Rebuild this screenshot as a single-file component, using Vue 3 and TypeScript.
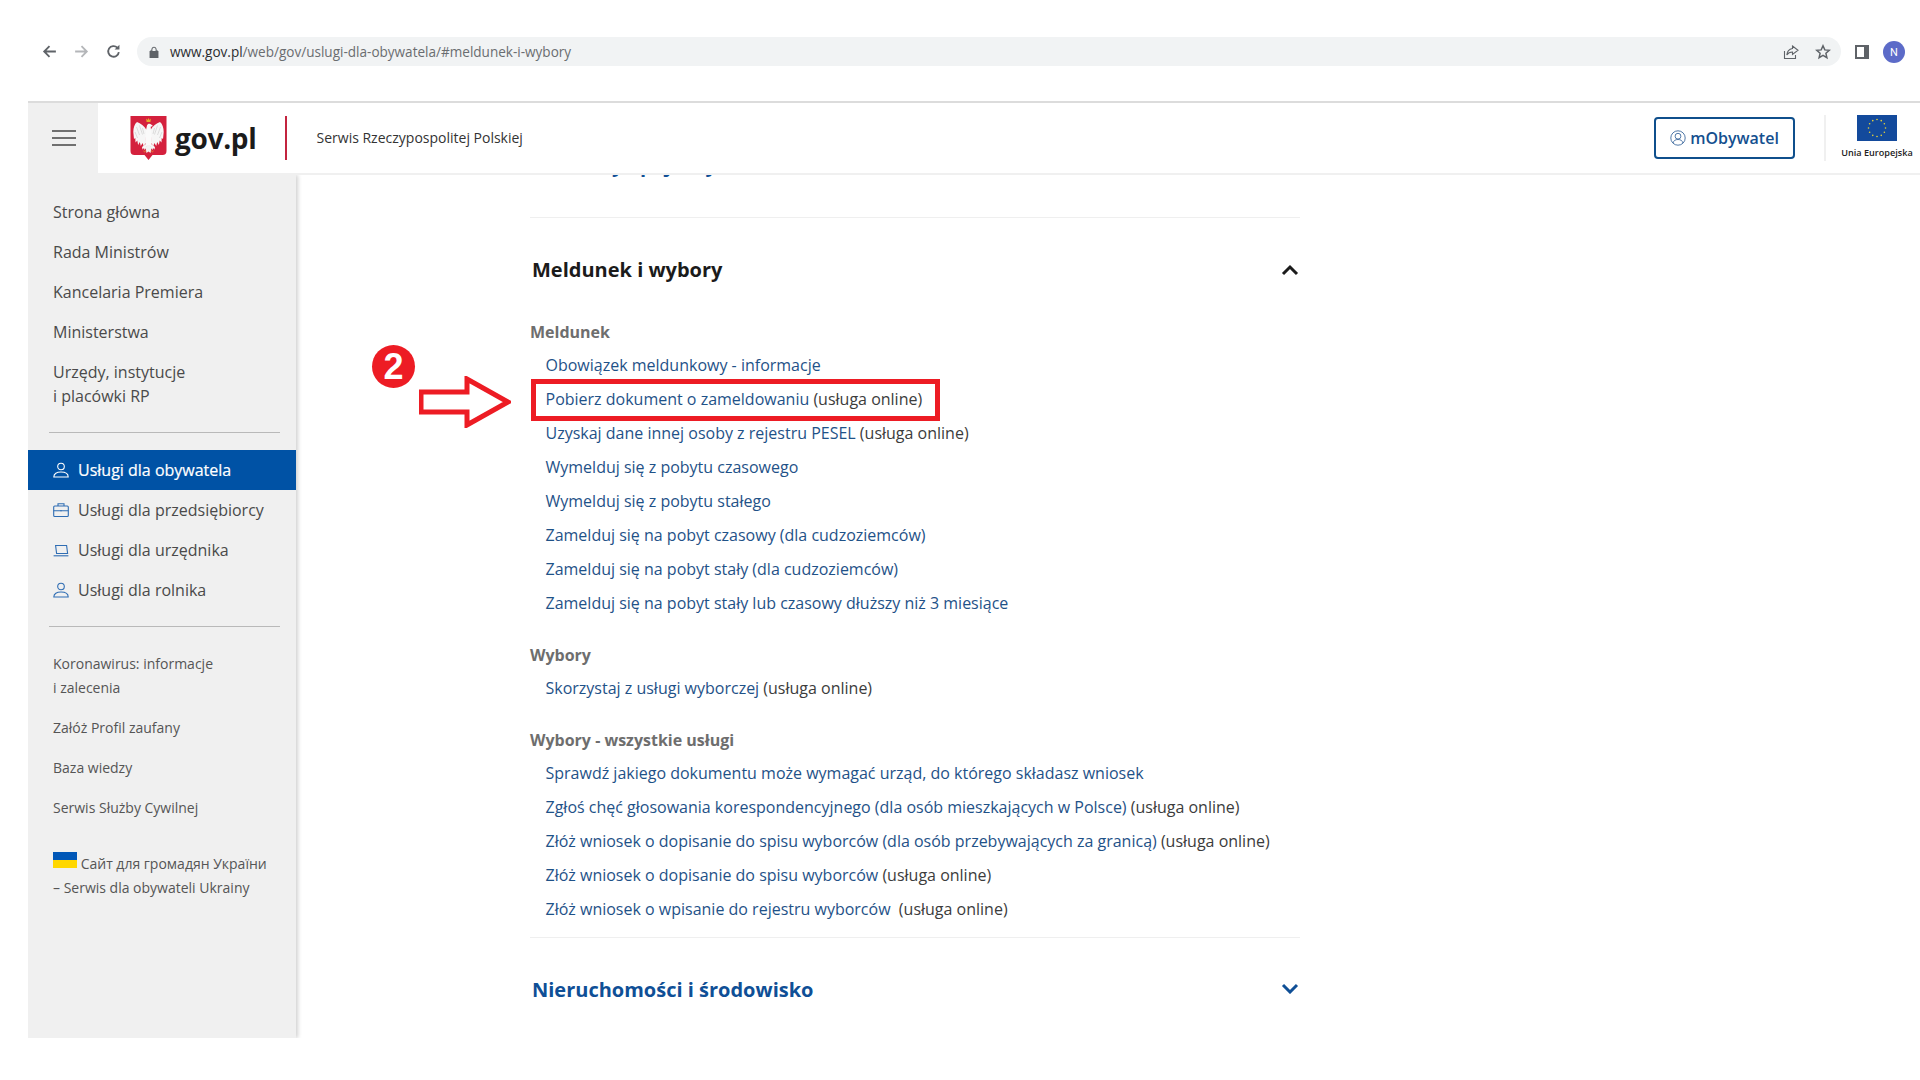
<script setup lang="ts">
interface Row { text: string; online?: string }
interface Group { title: string; rows: Row[] }

const topNav: string[][] = [
  ['Strona główna'],
  ['Rada Ministrów'],
  ['Kancelaria Premiera'],
  ['Ministerstwa'],
  ['Urzędy, instytucje', 'i placówki RP'],
]
const services = [
  { label: 'Usługi dla obywatela', icon: 'person', active: true },
  { label: 'Usługi dla przedsiębiorcy', icon: 'case', active: false },
  { label: 'Usługi dla urzędnika', icon: 'laptop', active: false },
  { label: 'Usługi dla rolnika', icon: 'person', active: false },
]
const extras: string[][] = [
  ['Koronawirus: informacje', 'i zalecenia'],
  ['Załóż Profil zaufany'],
  ['Baza wiedzy'],
  ['Serwis Służby Cywilnej'],
]
const groups: Group[] = [
  {
    title: 'Meldunek',
    rows: [
      { text: 'Obowiązek meldunkowy - informacje' },
      { text: 'Pobierz dokument o zameldowaniu', online: ' (usługa online)' },
      { text: 'Uzyskaj dane innej osoby z rejestru PESEL', online: ' (usługa online)' },
      { text: 'Wymelduj się z pobytu czasowego' },
      { text: 'Wymelduj się z pobytu stałego' },
      { text: 'Zamelduj się na pobyt czasowy (dla cudzoziemców)' },
      { text: 'Zamelduj się na pobyt stały (dla cudzoziemców)' },
      { text: 'Zamelduj się na pobyt stały lub czasowy dłuższy niż 3 miesiące' },
    ],
  },
  {
    title: 'Wybory',
    rows: [{ text: 'Skorzystaj z usługi wyborczej', online: ' (usługa online)' }],
  },
  {
    title: 'Wybory - wszystkie usługi',
    rows: [
      { text: 'Sprawdź jakiego dokumentu może wymagać urząd, do którego składasz wniosek' },
      { text: 'Zgłoś chęć głosowania korespondencyjnego (dla osób mieszkających w Polsce)', online: ' (usługa online)' },
      { text: 'Złóż wniosek o dopisanie do spisu wyborców (dla osób przebywających za granicą)', online: ' (usługa online)' },
      { text: 'Złóż wniosek o dopisanie do spisu wyborców', online: ' (usługa online)' },
      { text: 'Złóż wniosek o wpisanie do rejestru wyborców', online: '  (usługa online)' },
    ],
  },
]
const stars = Array.from({ length: 12 }, (_, i) => ({
  x: 20 + 8.5 * Math.sin((i * Math.PI) / 6),
  y: 13 - 8.5 * Math.cos((i * Math.PI) / 6),
}))
const sides = ['', 'matrix(-1 0 0 1 36 0)']
</script>

<template>
  <div class="page">
    <div class="toolbar">
      <svg class="nav-ico" viewBox="0 0 16 16"><path d="M14 8H3M8 3 3 8l5 5" fill="none" stroke="#5f6368" stroke-width="1.7" /></svg>
      <svg class="nav-ico" viewBox="0 0 16 16"><path d="M2 8h11M8 3l5 5-5 5" fill="none" stroke="#b4b6b9" stroke-width="1.7" /></svg>
      <svg class="nav-ico" viewBox="0 0 16 16"><path d="M13 8.5A5 5 0 1 1 11.6 4.4" fill="none" stroke="#5f6368" stroke-width="1.7" /><path d="M13.6 1.6v4.6H9z" fill="#5f6368" /></svg>
      <div class="omnibox">
        <svg class="lock" viewBox="0 0 10 12"><path d="M1 5h8v7H1zM2.8 5V3.4a2.2 2.2 0 0 1 4.4 0V5" fill="#5f6368" stroke="#5f6368" stroke-width=".9" /><path d="M3.4 5V3.4a1.6 1.6 0 0 1 3.2 0V5z" fill="#f1f3f4" /></svg>
        <span class="url"><b>www.gov.pl</b>/web/gov/uslugi-dla-obywatela/#meldunek-i-wybory</span>
        <svg class="omni-ico" viewBox="0 0 16 16"><path d="M1.5 7v7.5h11V11" fill="none" stroke="#5f6368" stroke-width="1.1" /><path d="M9.5 2 15 6.2 9.5 10.4V8C7 8 5 9 3.8 11c.3-3.6 2.5-6 5.7-6.500z" fill="none" stroke="#5f6368" stroke-width="1.1" /></svg>
        <svg class="omni-ico" viewBox="0 0 16 16"><path d="m8 1.8 1.8 4.100 4.500.4-3.400 3 1 4.400L8 11.400 4.100 13.700l1-4.400-3.400-3 4.500-.4z" fill="none" stroke="#5f6368" stroke-width="1.500" /></svg>
      </div>
      <div class="panel-ico"><span></span></div>
      <div class="avatar">N</div>
    </div>

    <div class="frame">
      <header class="site-header">
        <div class="burger"><i></i><i></i><i></i></div>
        <div class="brand">
          <svg class="crest" viewBox="0 0 36 44">
            <path d="M0 0h36v35q0 4-4 4H22l-4 5-4-5H4q-4 0-4-4z" fill="#d4213d" />
            <g v-for="t in sides" :key="t" :transform="t">
              <path d="M16 14C14 10 10 7.500 6.500 6 4 8 2.800 12 2.800 16l.7 7 1.300-1 .2 4.500 1.800-2 .8 4.500 1.700-3 1 4 1.800-3 1.200 3.500L15 27z" fill="#f6f6f6" />
              <path d="M6 11l3 8M4.500 16l2.500 6M9 9.500l3 9M12 12l1.500 6" stroke="#c9c9c9" stroke-width=".6" fill="none" />
              <path d="M16.500 27l-5 4 .5 2.500 1.500-1.500.5 2 2-2.500 1-3z" fill="#f6f6f6" />
              <path d="M13 35l1 .8 1-.8 1 .8" stroke="#e7a92c" stroke-width=".8" fill="none" />
            </g>
            <path d="M16.500 9.500c.5-2 3-2.500 4.200-1l1.800 1.500-2.300.7.300 3.300 1 13-3.500 4.500-3.500-4.500 1-13z" fill="#fafafa" />
            <path d="M15 31l3-2 3 2-1 6-2-1.500L16 37z" fill="#f2f2f2" />
            <path d="M15.600 2.500l1.400 1.400L18 2l1 1.900 1.400-1.400-.5 3.400h-3.800z" fill="#e7a92c" />
          </svg>
          <span class="logotype">gov.pl</span>
        </div>
        <div class="brand-rule"></div>
        <div class="service-name">Serwis Rzeczypospolitej Polskiej</div>
        <div class="header-right">
          <a class="mobywatel">
            <svg viewBox="0 0 16 16"><circle cx="8" cy="8" r="7.200" fill="none" stroke="#3d6a9e" stroke-width=".9" /><circle cx="8" cy="6.200" r="2.900" fill="none" stroke="#3d6a9e" stroke-width=".9" /><path d="M3 13c.6-2.400 2.500-3.500 5-3.500s4.400 1.100 5 3.500" fill="none" stroke="#3d6a9e" stroke-width=".9" /></svg>
            mObywatel
          </a>
          <div class="eu">
            <svg class="eu-flag" viewBox="0 0 40 26"><rect width="40" height="26" fill="#134a9c" /><circle v-for="(s, i) in stars" :key="i" :cx="s.x" :cy="s.y" r=".8" fill="#e6d23a" /></svg>
            <span>Unia Europejska</span>
          </div>
        </div>
      </header>

      <div class="content">
        <aside class="sidebar">
          <nav class="top-nav">
            <a v-for="item in topNav" :key="item[0]">
              <span v-for="line in item" :key="line">{{ line }}</span>
            </a>
          </nav>
          <div class="side-rule first"></div>
          <nav class="services">
            <a v-for="s in services" :key="s.label" :class="{ active: s.active }">
              <svg viewBox="0 0 16 16">
                <template v-if="s.icon === 'person'">
                  <circle cx="8" cy="4.500" r="3.300" />
                  <path d="M.8 15c0-3.500 3-5 7.200-5s7.200 1.500 7.200 5z" />
                </template>
                <template v-else-if="s.icon === 'case'">
                  <rect x=".7" y="4" width="14.600" height="10.500" rx="1" />
                  <path d="M5 4V1.800h6V4M.7 8.800h14.600M8 8v1.600" />
                </template>
                <template v-else>
                  <path d="M2.600 3.500h11l1 8h-11z" />
                  <path d="M.6 13.800h14.800" />
                </template>
              </svg>
              {{ s.label }}
            </a>
          </nav>
          <div class="side-rule second"></div>
          <nav class="extras">
            <a v-for="item in extras" :key="item[0]">
              <span v-for="line in item" :key="line">{{ line }}</span>
            </a>
            <a class="ua">
              <span><i class="ua-flag"></i> Сайт для громадян України</span>
              <span>– Serwis dla obywateli Ukrainy</span>
            </a>
          </nav>
        </aside>

        <main class="main">
          <h2 class="section-title clipped">Kierowcy i pojazdy</h2>
          <div class="rule top"></div>
          <div class="section-head">
            <h2 class="section-title">Meldunek i wybory</h2>
            <svg class="chev" viewBox="0 0 18 12"><path d="M2 10l7-7 7 7" fill="none" stroke="#1b1b1b" stroke-width="3" /></svg>
          </div>
          <section v-for="g in groups" :key="g.title" class="group">
            <h3>{{ g.title }}</h3>
            <ul>
              <li v-for="r in g.rows" :key="r.text"><a>{{ r.text }}</a>{{ r.online }}</li>
            </ul>
          </section>
          <div class="rule bottom"></div>
          <div class="section-head next">
            <h2 class="section-title blue">Nieruchomości i środowisko</h2>
            <svg class="chev up" viewBox="0 0 18 12"><path d="M2 3l7 7 7-7" fill="none" stroke="#0f4f96" stroke-width="3" /></svg>
          </div>
        </main>
      </div>
    </div>

    <div class="badge">2</div>
    <svg class="arrow" viewBox="0 0 92 52"><path d="M2 16h46V3l41 23-41 23V36H2z" fill="#fff" stroke="#ed1c24" stroke-width="5" /></svg>
    <div class="highlight"></div>
  </div>
</template>

<style>
html, body { margin: 0; background: #fff; }
</style>

<style scoped>
.page { position: relative; width: 1920px; height: 1080px; overflow: hidden; font-family: "Open Sans", "Noto Sans", sans-serif; background: #fff; color: #444; }

.toolbar { height: 101px; box-sizing: border-box; padding: 37px 15px 0 41px; display: flex; align-items: flex-start; }
.nav-ico { width: 17px; height: 17px; margin-right: 15px; margin-top: 6px; flex: none; }
.omnibox { width: 1704px; height: 29px; border-radius: 15px; background: #f1f3f4; display: flex; align-items: center; padding: 0 10px 0 12px; box-sizing: border-box; flex: none; }
.lock { width: 10px; height: 12px; flex: none; }
.url { margin-left: 11px; font-size: 13.550px; color: #6a6d70; flex: 1; }
.url b { font-weight: 400; color: #2b2d30; }
.omni-ico { width: 16px; height: 16px; margin-left: 16px; flex: none; }
.panel-ico { width: 10px; height: 10px; margin: 8px 0 0 14px; background: #fff; border: 2px solid #5f6368; position: relative; flex: none; }
.panel-ico span { position: absolute; right: 0; top: 0; bottom: 0; width: 3px; background: #5f6368; }
.avatar { width: 22px; height: 22px; border-radius: 50%; background: #5c6bc8; color: #fff; font: 400 11px "Roboto", sans-serif; display: flex; align-items: center; justify-content: center; margin: 4px 0 0 14px; flex: none; }

.frame { margin-left: 28px; border-top: 2px solid #dcdcdc; }
.site-header { position: relative; z-index: 2; height: 70px; background: #fff; border-bottom: 2px solid #f0f0f0; display: flex; align-items: center; }
.burger { width: 70px; height: 100%; background: #f0f0f0; padding-left: 2px; box-sizing: border-box; display: flex; flex-direction: column; gap: 5px; align-items: center; justify-content: center; flex: none; }
.burger i { display: block; width: 24px; height: 2px; background: #707070; }
.brand { display: flex; align-items: center; margin-left: 32px; }
.crest { width: 37px; height: 44px; }
.logotype { margin-left: 8px; font-weight: 700; font-size: 28px; line-height: 40px; color: #1b1b1b; letter-spacing: -.3px; }
.brand-rule { width: 2px; height: 44px; background: #c3243f; margin-left: 28px; }
.service-name { margin-left: 30px; margin-bottom: 1px; font-size: 14px; color: #333; }
.header-right { margin-left: auto; display: flex; align-items: center; height: 100%; }
.mobywatel { width: 141px; height: 42px; box-sizing: border-box; border: 2px solid #0f4f8c; border-radius: 4px; display: flex; align-items: center; justify-content: center; gap: 4px; color: #14508f; font-size: 16px; font-weight: 600; }
.mobywatel svg { width: 16px; height: 16px; }
.eu { margin-left: 29px; width: 96px; height: 46px; border-left: 2px solid #f0f0f0; display: flex; flex-direction: column; align-items: center; box-sizing: border-box; padding-left: 8px; }
.eu-flag { width: 40px; height: 26px; }
.eu span { margin-top: 5px; font-size: 9.100px; line-height: 14px; font-weight: 600; color: #222; white-space: nowrap; }

.content { display: flex; align-items: flex-start; }
.sidebar { width: 268px; height: 863px; flex: none; background: #f0f0f0; box-shadow: 2px 0 4px rgba(0,0,0,.18); clip-path: inset(0 -8px 0 0); color: #4a4a4a; position: relative; z-index: 1; }
.top-nav { padding: 25px 0 0 25px; display: flex; flex-direction: column; gap: 16px; font-size: 16px; line-height: 24px; }
.top-nav a, .extras a { display: flex; flex-direction: column; }
.side-rule { height: 1px; background: #b9b9b9; margin: 0 16px 0 21px; }
.side-rule.first { margin-top: 24px; }
.services { margin-top: 17px; display: flex; flex-direction: column; }
.services a { height: 40px; display: flex; align-items: center; padding-left: 25px; font-size: 16px; color: #4a4a4a; }
.services a.active { background: #0052a5; color: #fff; -webkit-text-stroke: .2px #fff; }
.services svg { width: 16px; height: 16px; margin-right: 9px; fill: none; stroke: #2f6db3; stroke-width: 1.100; }
.services a.active svg { stroke: #fff; }
.side-rule.second { margin-top: 16px; }
.extras { padding: 25px 0 0 25px; display: flex; flex-direction: column; gap: 16px; font-size: 14px; line-height: 24px; color: #555; }
.extras .ua { margin-top: 16px; }
.ua-flag { display: inline-block; width: 24px; height: 16px; background: linear-gradient(#0057b7 50%, #ffd700 50%); vertical-align: 1px; }

.main { width: 770px; margin-left: 234px; flex: none; }
.section-title { margin: 0; font-size: 20px; line-height: 30px; font-weight: 700; color: #1b1b1b; padding-left: 2px; }
.clipped { margin-top: -25px; color: #0f4f96; }
.rule { height: 1px; background: #efefef; }
.rule.top { margin-top: 37px; }
.section-head { display: flex; justify-content: space-between; align-items: center; height: 30px; margin-top: 37px; }
.chev { width: 18px; height: 12px; flex: none; margin-right: 1px; }
.chev.up { margin-bottom: 4px; }
.group h3 { margin: 0; font-size: 16px; line-height: 24px; font-weight: 700; color: #6e6e6e; }
.group { margin-top: 23px; }
.group:first-of-type { margin-top: 35px; }
ul { list-style: none; margin: 0; padding: 4px 0 0 15.500px; }
li { height: 34px; line-height: 34px; font-size: 16px; color: #3c3c3c; white-space: pre; }
li a { color: #1f5288; }
.rule.bottom { margin-top: 11px; }
.next { margin-top: 37px; }
.blue { color: #0f4f96; }

.badge { position: absolute; left: 372px; top: 345px; width: 43px; height: 43px; border-radius: 50%; background: #ed1c24; color: #fff; font: 700 36px/43px "Liberation Sans", sans-serif; text-align: center; }
.arrow { position: absolute; left: 419px; top: 376px; width: 92px; height: 52px; }
.highlight { position: absolute; left: 531px; top: 379px; width: 409px; height: 42px; box-sizing: border-box; border: 5px solid #ed1c24; }
</style>
